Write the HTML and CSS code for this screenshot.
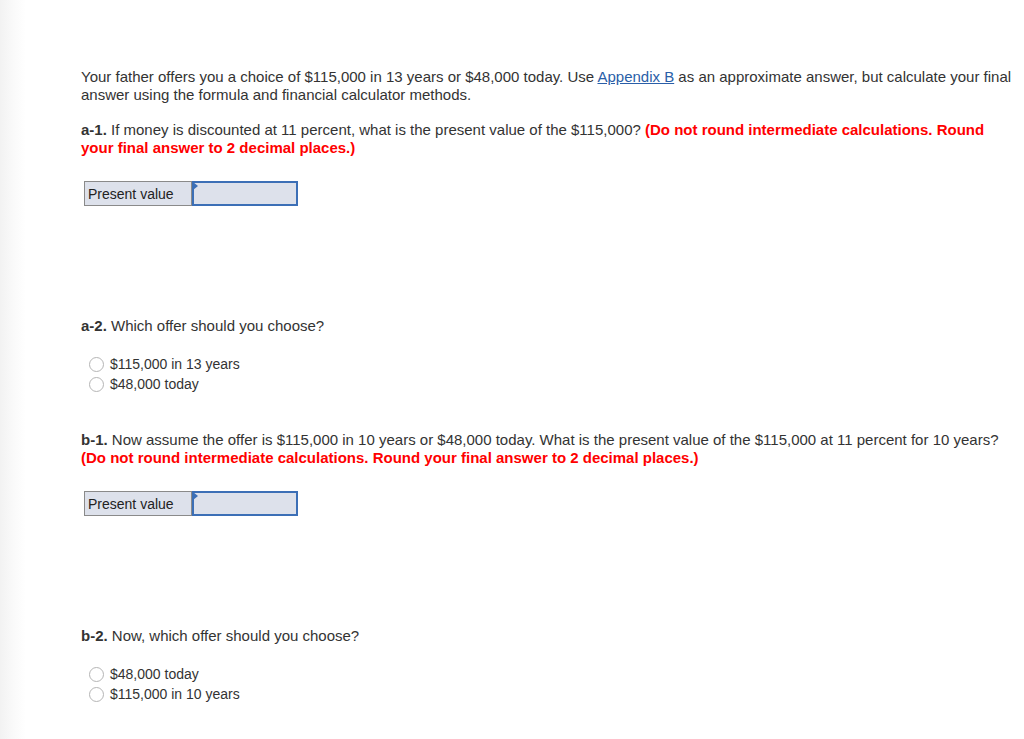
FILE: index.html
```html
<!DOCTYPE html>
<html>
<head>
<meta charset="utf-8">
<link rel="stylesheet" href="styles.css">
</head>
<body>
<div class="page">
  <div class="content">
    <p class="intro">Your father offers you a choice of $115,000 in 13 years or $48,000 today. Use <a class="link" href="#">Appendix B</a> as an approximate answer, but calculate your final answer using the formula and financial calculator methods.</p>

    <p class="q"><b>a-1.</b> If money is discounted at 11 percent, what is the present value of the $115,000? <span class="warn">(Do not round intermediate calculations. Round your final answer to 2 decimal places.)</span></p>

    <div class="answer">
      <div class="label">Present value</div>
      <div class="field"><span class="flag"></span></div>
    </div>

    <p class="q q-choose"><b>a-2.</b> Which offer should you choose?</p>
    <ul class="options">
      <li><span class="radio"></span>$115,000 in 13 years</li>
      <li><span class="radio"></span>$48,000 today</li>
    </ul>

    <p class="q q-b1"><b>b-1.</b> Now assume the offer is $115,000 in 10 years or $48,000 today. What is the present value of the $115,000 at 11 percent for 10 years? <span class="warn">(Do not round intermediate calculations. Round your final answer to 2 decimal places.)</span></p>

    <div class="answer">
      <div class="label">Present value</div>
      <div class="field"><span class="flag"></span></div>
    </div>

    <p class="q q-choose"><b>b-2.</b> Now, which offer should you choose?</p>
    <ul class="options">
      <li><span class="radio"></span>$48,000 today</li>
      <li><span class="radio"></span>$115,000 in 10 years</li>
    </ul>
  </div>
</div>
</body>
</html>
```
FILE: styles.css
```css
html, body {
  margin: 0;
  padding: 0;
  background: #ffffff;
}
body {
  font-family: "Liberation Sans", Arial, sans-serif;
  font-size: 15px;
  color: #333333;
  line-height: 18px;
}
.page {
  min-height: 739px;
  background: linear-gradient(to right, #f2f2f2 0px, #fafafa 14px, #ffffff 26px);
  overflow: hidden;
}
.content {
  padding: 68px 9px 0 81px;
}
p {
  margin: 0;
}
.intro {
  margin-bottom: 17px;
}
.link {
  color: #2a5ea8;
  text-decoration: underline;
}
.q b {
  font-weight: bold;
}
.warn {
  color: #ff0000;
  font-weight: bold;
}
.answer {
  display: flex;
  width: 214px;
  height: 25px;
  margin: 24px 0 0 3px;
  box-sizing: border-box;
  border: 1px solid #8a8a8a;
  background: #dde1eb;
  font-size: 14px;
}
.label {
  width: 107px;
  box-sizing: border-box;
  padding: 3px 0 0 3px;
  color: #222222;
  border-right: 1px solid #8a8a8a;
}
.field {
  position: relative;
  flex: 1;
  border: 2px solid #3c6fb6;
  margin: -1px -1px -1px 0;
  background: #dde1eb;
}
.flag {
  position: absolute;
  left: -1px;
  top: -1px;
  width: 0;
  height: 0;
  border-top: 4px solid transparent;
  border-bottom: 4px solid transparent;
  border-left: 5px solid #3c6fb6;
}
.q-choose {
  margin-top: 111px;
}
.options {
  list-style: none;
  margin: 19px 0 0 0;
  padding: 0;
  font-size: 14px;
}
.options li {
  display: flex;
  align-items: center;
  height: 20px;
  padding-left: 8px;
}
.radio {
  width: 13px;
  height: 13px;
  border: 1px solid #b5b5b5;
  border-radius: 50%;
  background: #ffffff;
  margin-right: 6px;
  box-sizing: content-box;
}
.q-b1 {
  margin-top: 37px;
}
```
